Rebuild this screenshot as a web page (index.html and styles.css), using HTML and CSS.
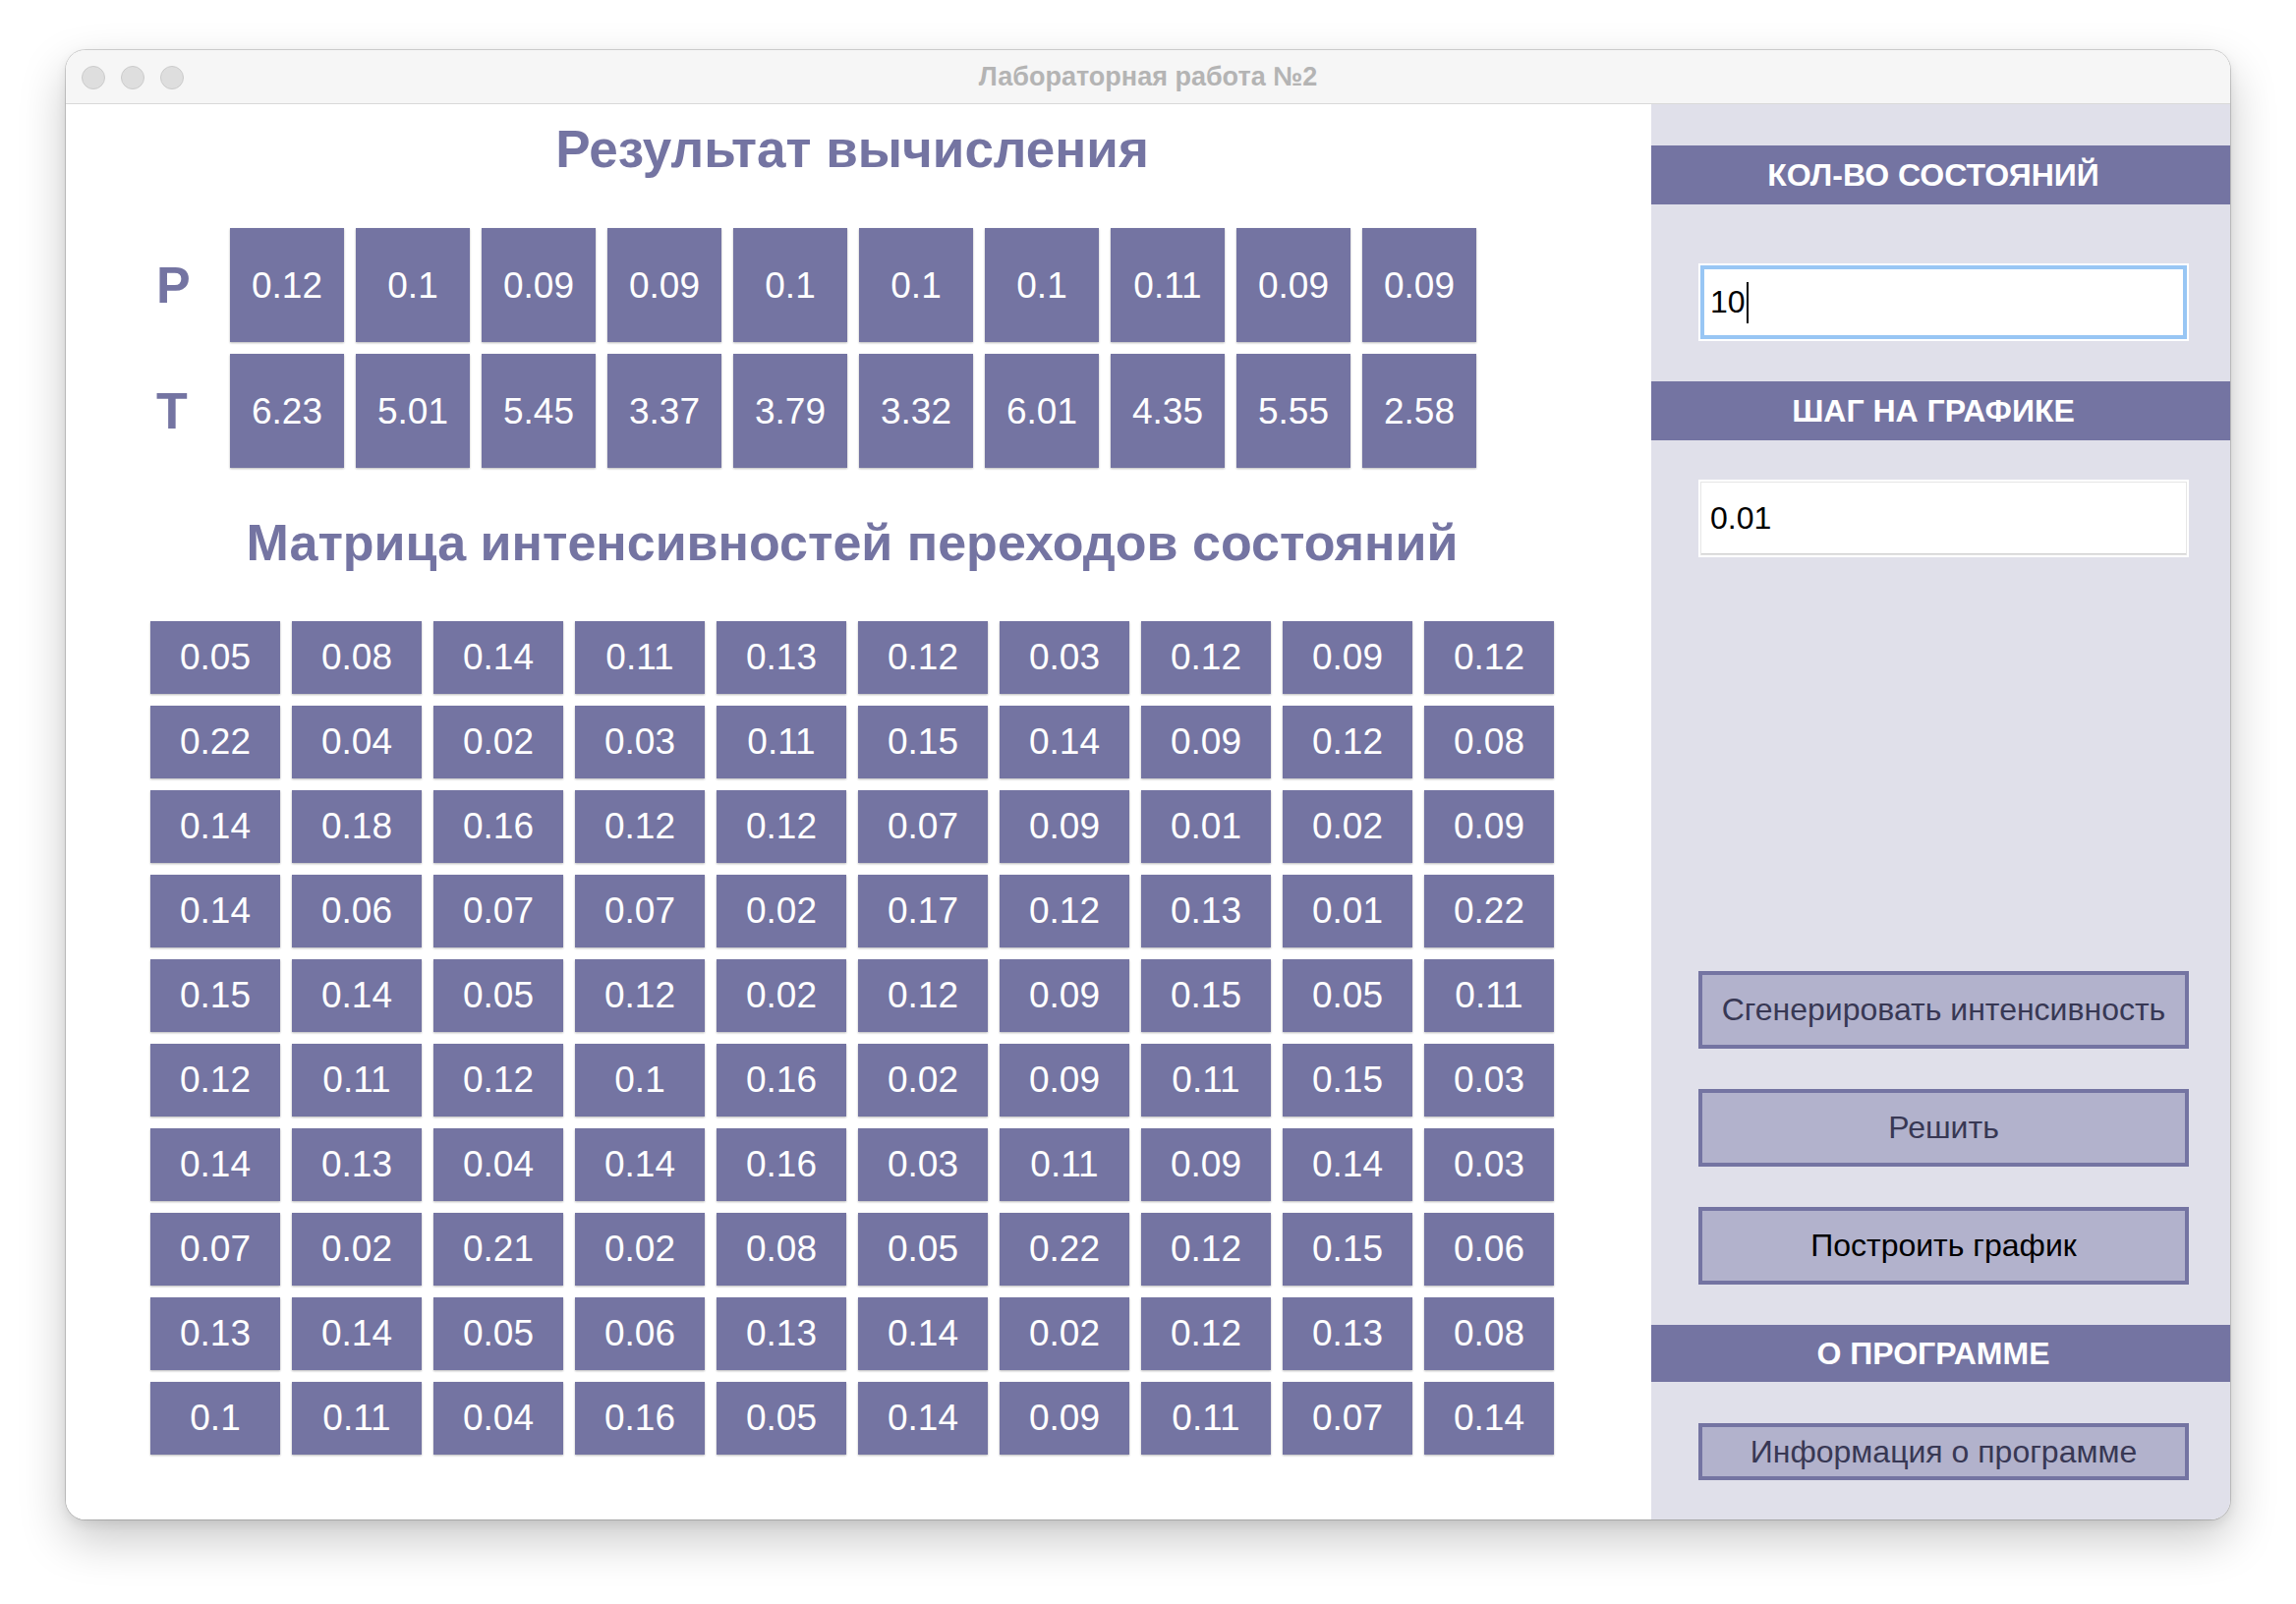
FILE: index.html
```html
<!DOCTYPE html>
<html lang="ru">
<head>
<meta charset="utf-8">
<title>Лабораторная работа №2</title>
<link rel="stylesheet" href="styles.css">
</head>
<body>
<div class="desktop">
  <div class="window">
    <div class="titlebar">
      <div class="lights"><span class="light"></span><span class="light"></span><span class="light"></span></div>
      <div class="title">Лабораторная работа №2</div>
    </div>
    <div class="content">
      <main class="main">
        <h1 class="heading first">Результат вычисления</h1>
        <div class="pt">
          <div class="label">P</div>
          <div class="box">0.12</div><div class="box">0.1</div><div class="box">0.09</div><div class="box">0.09</div><div class="box">0.1</div><div class="box">0.1</div><div class="box">0.1</div><div class="box">0.11</div><div class="box">0.09</div><div class="box">0.09</div>
          <div class="label">T</div>
          <div class="box">6.23</div><div class="box">5.01</div><div class="box">5.45</div><div class="box">3.37</div><div class="box">3.79</div><div class="box">3.32</div><div class="box">6.01</div><div class="box">4.35</div><div class="box">5.55</div><div class="box">2.58</div>
        </div>
        <h2 class="heading second">Матрица интенсивностей переходов состояний</h2>
        <div class="matrix">
          <div class="cell">0.05</div><div class="cell">0.08</div><div class="cell">0.14</div><div class="cell">0.11</div><div class="cell">0.13</div><div class="cell">0.12</div><div class="cell">0.03</div><div class="cell">0.12</div><div class="cell">0.09</div><div class="cell">0.12</div>
          <div class="cell">0.22</div><div class="cell">0.04</div><div class="cell">0.02</div><div class="cell">0.03</div><div class="cell">0.11</div><div class="cell">0.15</div><div class="cell">0.14</div><div class="cell">0.09</div><div class="cell">0.12</div><div class="cell">0.08</div>
          <div class="cell">0.14</div><div class="cell">0.18</div><div class="cell">0.16</div><div class="cell">0.12</div><div class="cell">0.12</div><div class="cell">0.07</div><div class="cell">0.09</div><div class="cell">0.01</div><div class="cell">0.02</div><div class="cell">0.09</div>
          <div class="cell">0.14</div><div class="cell">0.06</div><div class="cell">0.07</div><div class="cell">0.07</div><div class="cell">0.02</div><div class="cell">0.17</div><div class="cell">0.12</div><div class="cell">0.13</div><div class="cell">0.01</div><div class="cell">0.22</div>
          <div class="cell">0.15</div><div class="cell">0.14</div><div class="cell">0.05</div><div class="cell">0.12</div><div class="cell">0.02</div><div class="cell">0.12</div><div class="cell">0.09</div><div class="cell">0.15</div><div class="cell">0.05</div><div class="cell">0.11</div>
          <div class="cell">0.12</div><div class="cell">0.11</div><div class="cell">0.12</div><div class="cell">0.1</div><div class="cell">0.16</div><div class="cell">0.02</div><div class="cell">0.09</div><div class="cell">0.11</div><div class="cell">0.15</div><div class="cell">0.03</div>
          <div class="cell">0.14</div><div class="cell">0.13</div><div class="cell">0.04</div><div class="cell">0.14</div><div class="cell">0.16</div><div class="cell">0.03</div><div class="cell">0.11</div><div class="cell">0.09</div><div class="cell">0.14</div><div class="cell">0.03</div>
          <div class="cell">0.07</div><div class="cell">0.02</div><div class="cell">0.21</div><div class="cell">0.02</div><div class="cell">0.08</div><div class="cell">0.05</div><div class="cell">0.22</div><div class="cell">0.12</div><div class="cell">0.15</div><div class="cell">0.06</div>
          <div class="cell">0.13</div><div class="cell">0.14</div><div class="cell">0.05</div><div class="cell">0.06</div><div class="cell">0.13</div><div class="cell">0.14</div><div class="cell">0.02</div><div class="cell">0.12</div><div class="cell">0.13</div><div class="cell">0.08</div>
          <div class="cell">0.1</div><div class="cell">0.11</div><div class="cell">0.04</div><div class="cell">0.16</div><div class="cell">0.05</div><div class="cell">0.14</div><div class="cell">0.09</div><div class="cell">0.11</div><div class="cell">0.07</div><div class="cell">0.14</div>
        </div>
      </main>
      <aside class="sidebar">
        <div class="section-title st-first">КОЛ-ВО СОСТОЯНИЙ</div>
        <div class="field focused field-first"><span class="value">10</span><span class="caret"></span></div>
        <div class="section-title st-second">ШАГ НА ГРАФИКЕ</div>
        <div class="field field-second"><span class="value">0.01</span></div>
        <div class="spacer"></div>
        <button class="btn">Сгенерировать интенсивность</button>
        <button class="btn btn-gap">Решить</button>
        <button class="btn btn-gap btn-dark">Построить график</button>
        <div class="section-title st-third">О ПРОГРАММЕ</div>
        <button class="btn btn-small">Информация о программе</button>
      </aside>
    </div>
  </div>
</div>
</body>
</html>
```
FILE: styles.css
```css
html, body {
  margin: 0;
  padding: 0;
  background: #ffffff;
}

body {
  font-family: "Liberation Sans", Arial, sans-serif;
}

.desktop {
  padding: 51px 0 0 67px;
  height: 1632px;
  box-sizing: border-box;
}

.window {
  width: 2202px;
  height: 1495px;
  border-radius: 20px;
  overflow: hidden;
  display: flex;
  flex-direction: column;
  background: #ffffff;
  box-shadow: 0 0 0 1px rgba(0, 0, 0, 0.16), 0 20px 48px rgba(0, 0, 0, 0.22), 0 4px 12px rgba(0, 0, 0, 0.08);
}

.titlebar {
  height: 54px;
  flex: 0 0 auto;
  background: #f6f6f6;
  border-bottom: 1px solid #d9d9d9;
  display: flex;
  align-items: center;
  justify-content: center;
  position: relative;
}

.lights {
  position: absolute;
  left: 16px;
  top: 16px;
  display: flex;
  gap: 16px;
}

.light {
  width: 22px;
  height: 22px;
  border-radius: 50%;
  background: #dedede;
  border: 1px solid #cbcbcb;
}

.title {
  font-size: 27px;
  font-weight: bold;
  color: #b4b4b4;
}

.content {
  flex: 1 1 auto;
  display: flex;
  min-height: 0;
}

.main {
  width: 1613px;
  flex: 0 0 1613px;
  box-sizing: border-box;
  padding-left: 86px;
  background: #ffffff;
}

.heading {
  width: 1428px;
  margin: 0;
  text-align: center;
  font-size: 52px;
  line-height: 60px;
  font-weight: bold;
  color: #7474a2;
}

.heading.first {
  margin-top: 16px;
  font-size: 53px;
}

.heading.second {
  margin-top: 46px;
}

.pt {
  margin-top: 50px;
  margin-left: 9px;
  display: grid;
  grid-template-columns: 60px repeat(10, 116px);
  grid-auto-rows: 116px;
  column-gap: 12px;
  row-gap: 12px;
}

.label {
  font-size: 52px;
  font-weight: bold;
  color: #7474a2;
  display: flex;
  align-items: center;
  margin-left: -3px;
}

.box, .cell {
  background: #7474a2;
  color: #ffffff;
  font-size: 37px;
  display: flex;
  align-items: center;
  justify-content: center;
  box-shadow: 0 1px 2px rgba(0, 0, 0, 0.28);
}

.box {
  padding-top: 2px;
  box-sizing: border-box;
}

.matrix {
  margin-top: 50px;
  display: grid;
  grid-template-columns: repeat(10, 132px);
  grid-auto-rows: 74px;
  column-gap: 12px;
  row-gap: 12px;
}

.sidebar {
  flex: 1 1 auto;
  background: #e0e0ea;
  display: flex;
  flex-direction: column;
  padding-bottom: 40px;
}

.section-title {
  height: 60px;
  background: #7474a2;
  color: #ffffff;
  font-weight: bold;
  font-size: 32px;
  display: flex;
  align-items: center;
  justify-content: center;
  padding-right: 15px;
}

.st-first { margin-top: 42px; }
.st-second { margin-top: 41px; }
.st-third { margin-top: 41px; height: 58px; }

.field {
  margin-left: 48px;
  width: 499px;
  height: 79px;
  box-sizing: border-box;
  background: #ffffff;
  border: 2px solid #ffffff;
  box-shadow: inset 0 0 0 1px #e6e6e6, inset 0 -2px 0 #d0d0d0;
  display: flex;
  align-items: center;
  padding-left: 10px;
  font-size: 32px;
  color: #000000;
}

.field.focused {
  box-shadow: inset 0 0 0 4px #98c6f4;
}

.field-first { margin-top: 60px; }
.field-second { margin-top: 40px; }

.caret {
  width: 2px;
  height: 42px;
  background: #000000;
  margin-left: 1px;
}

.spacer {
  flex: 1 1 auto;
}

.btn {
  margin: 0 0 0 48px;
  width: 499px;
  height: 79px;
  box-sizing: border-box;
  background: #b2b2cc;
  border: 4px solid #7474a2;
  color: #383854;
  font-family: "Liberation Sans", Arial, sans-serif;
  font-size: 32px;
  padding: 0;
  text-align: center;
}

.btn-gap { margin-top: 41px; }
.btn-dark { color: #000000; }
.btn-small { margin-top: 42px; height: 58px; }
```
